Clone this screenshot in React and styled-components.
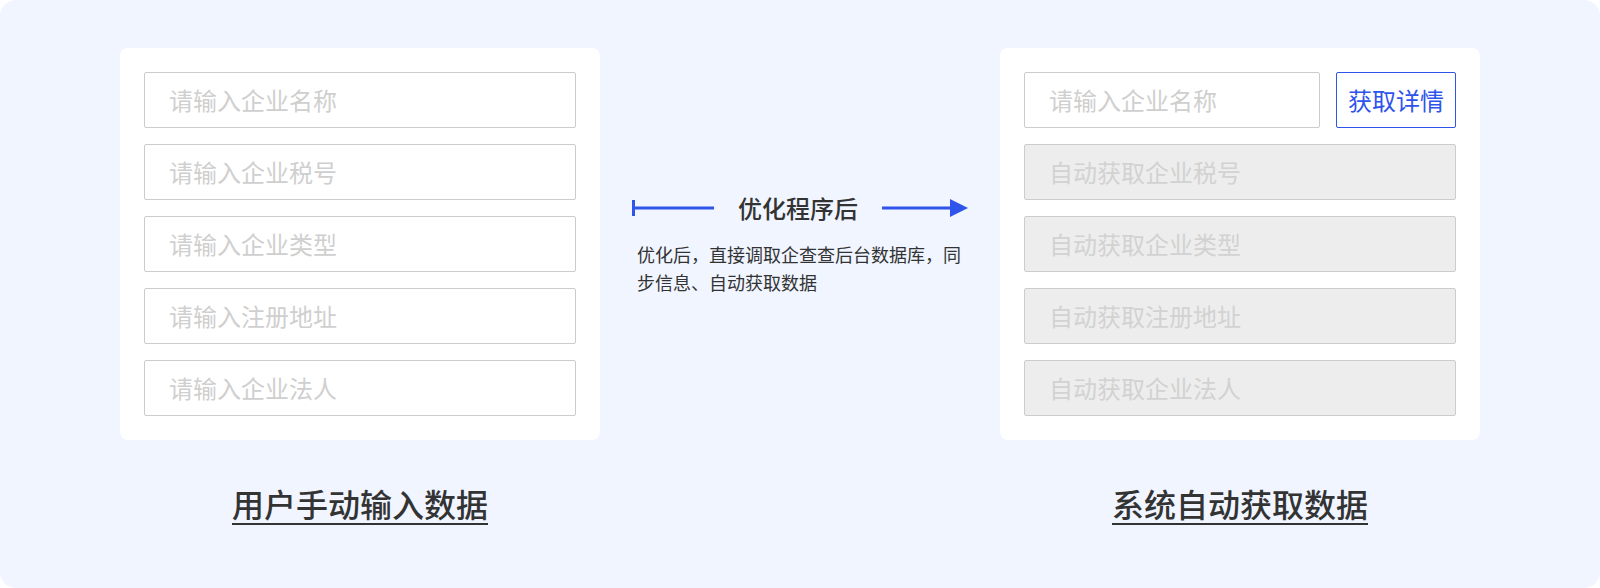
import React from 'react'
import styled, { createGlobalStyle } from 'styled-components';

const GlobalStyle = createGlobalStyle`
  html, body {
    margin: 0;
    padding: 0;
    background: #ffffff;
  }
  * {
    box-sizing: border-box;
  }
  body {
    font-family: "Noto Sans CJK SC", "Noto Sans", sans-serif;
  }
`

const Page = styled.div`
  width: 1600px;
  height: 588px;
  background: #f0f5ff;
  border-radius: 16px;
  padding-top: 48px;
  display: flex;
  flex-direction: column;
  align-items: center;
`;

const Row = styled.div`
  display: grid;
  grid-template-columns: 480px 336px 480px;
  column-gap: 32px;
`;

const Card = styled.div`
  background: #ffffff;
  border-radius: 8px;
  padding: 24px;
  display: flex;
  flex-direction: column;
  gap: 16px;
`;

const FieldLine = styled.div`
  display: flex;
  gap: 16px;
  input {
    flex: 1;
    min-width: 0;
  }
`;

const Field = styled.input`
  display: block;
  width: 100%;
  height: 56px;
  flex: none;
  margin: 0;
  border: 1px solid #cccccc;
  border-radius: 2px;
  padding: 0 0 2px 24px;
  font-family: inherit;
  font-size: 24px;
  color: #333;
  background: ${p => (p.disabled ? '#ededed' : '#ffffff')};
  outline: none;
  &::placeholder {
    color: ${p => (p.disabled ? '#d2d2d2' : '#cfcfcf')};
  }
`;

const FetchButton = styled.button`
  width: 120px;
  height: 56px;
  flex: none;
  border: 1px solid #2f54eb;
  border-radius: 2px;
  background: #ffffff;
  color: #2f54eb;
  font-family: inherit;
  font-size: 24px;
  padding: 0 0 2px;
  cursor: pointer;
`;

const Middle = styled.div`
  align-self: center;
  display: flex;
  flex-direction: column;
  align-items: center;
  gap: 16px;
`;

const TitleRow = styled.div`
  display: flex;
  align-items: center;
  gap: 24px;
  height: 32px;
`;

const Title = styled.div`
  font-size: 24px;
  font-weight: 500;
  color: #333333;
  line-height: 32px;
`;

const Desc = styled.div`
  width: 326px;
  font-size: 18px;
  line-height: 28px;
  color: #333333;
`;

const Caption = styled.div`
  justify-self: center;
  margin-top: 43px;
  font-size: 32px;
  font-weight: 500;
  line-height: 40px;
  color: #333333;
  text-decoration: underline;
  text-decoration-thickness: 2px;
  text-underline-offset: 6px;
`;

const leftFields = ['请输入企业名称', '请输入企业税号', '请输入企业类型', '请输入注册地址', '请输入企业法人'];
const autoFields = ['自动获取企业税号', '自动获取企业类型', '自动获取注册地址', '自动获取企业法人'];

function StartBar() {
    return (
        <svg width="82" height="18" viewBox="0 0 82 18">
            <rect x="0" y="1" width="3" height="16" fill="#2f54eb" />
            <rect x="3" y="7.5" width="79" height="3" fill="#2f54eb" />
        </svg>
    )
}

function EndArrow() {
    return (
        <svg width="86" height="20" viewBox="0 0 86 20">
            <rect x="0" y="8.5" width="70" height="3" fill="#2f54eb" />
            <polygon points="68,1 86,10 68,19" fill="#2f54eb" />
        </svg>
    )
}

export default function App() {
    return (
        <Page>
            <GlobalStyle />
            <Row>
                <Card>
                    {leftFields.map((text, index) => <Field key={index} placeholder={text} />)}
                </Card>
                <Middle>
                    <TitleRow>
                        <StartBar />
                        <Title>优化程序后</Title>
                        <EndArrow />
                    </TitleRow>
                    <Desc>优化后，直接调取企查查后台数据库，同步信息、自动获取数据</Desc>
                </Middle>
                <Card>
                    <FieldLine>
                        <Field placeholder="请输入企业名称" />
                        <FetchButton>获取详情</FetchButton>
                    </FieldLine>
                    {autoFields.map((text, index) => <Field key={index} placeholder={text} disabled />)}
                </Card>
            </Row>
            <Row>
                <Caption>用户手动输入数据</Caption>
                <div />
                <Caption>系统自动获取数据</Caption>
            </Row>
        </Page>
    )
}
